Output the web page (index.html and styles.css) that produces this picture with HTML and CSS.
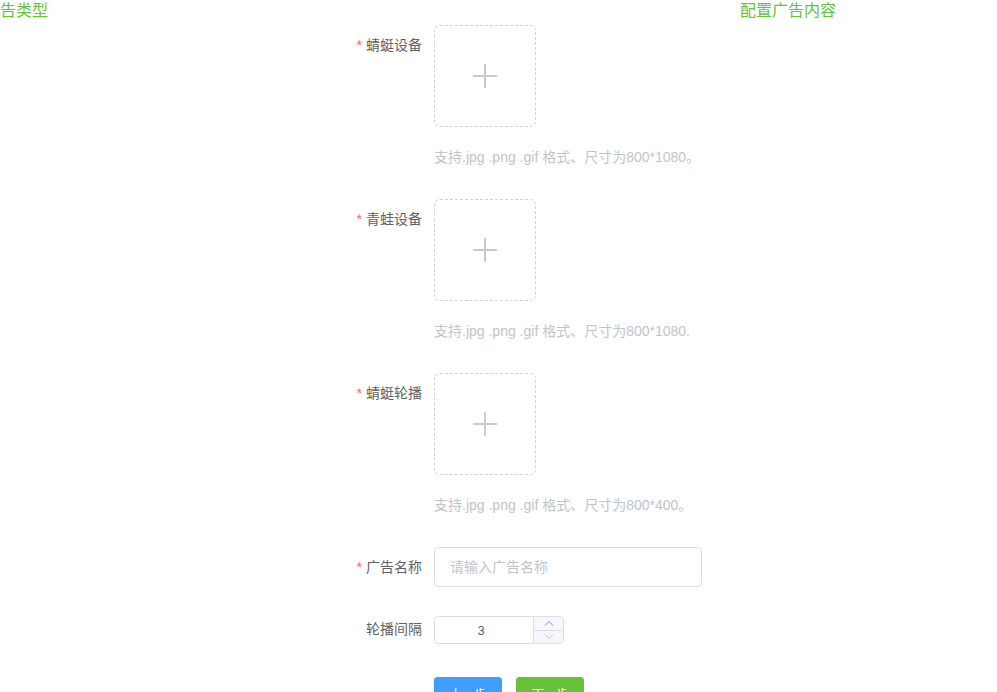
FILE: index.html
```html
<!DOCTYPE html>
<html lang="zh-CN">
<head>
  <meta charset="UTF-8">
  <title>配置广告内容</title>
  <link rel="stylesheet" href="styles.css">
</head>
<body>

  <!-- 步骤标题 -->
  <div class="steps">
    <span class="step-title">告类型</span>
    <span class="step-title step-right">配置广告内容</span>
  </div>

  <form class="ad-form">
    <div class="form-item">
      <label class="form-label required">蜻蜓设备</label>
      <div class="form-content">
        <div class="upload-box"><span class="plus"></span></div>
        <div class="tip">支持.jpg .png .gif 格式、尺寸为800*1080。</div>
      </div>
    </div>

    <div class="form-item">
      <label class="form-label required">青蛙设备</label>
      <div class="form-content">
        <div class="upload-box"><span class="plus"></span></div>
        <div class="tip">支持.jpg .png .gif 格式、尺寸为800*1080.</div>
      </div>
    </div>

    <div class="form-item">
      <label class="form-label required">蜻蜓轮播</label>
      <div class="form-content">
        <div class="upload-box"><span class="plus"></span></div>
        <div class="tip">支持.jpg .png .gif 格式、尺寸为800*400。</div>
      </div>
    </div>

    <div class="form-item">
      <label class="form-label required">广告名称</label>
      <div class="form-content">
        <input class="text-input" type="text" placeholder="请输入广告名称">
      </div>
    </div>

    <div class="form-item">
      <label class="form-label">轮播间隔</label>
      <div class="form-content">
        <div class="input-number">
          <input type="text" value="3">
          <div class="num-controls">
            <span class="num-btn">
              <svg width="10" height="6" viewBox="0 0 10 6"><path d="M1 5.5 L5 1.5 L9 5.5" fill="none" stroke="#909399" stroke-width="1"/></svg>
            </span>
            <span class="num-btn">
              <svg width="10" height="6" viewBox="0 0 10 6"><path d="M1 0.5 L5 4.5 L9 0.5" fill="none" stroke="#c0c4cc" stroke-width="1"/></svg>
            </span>
          </div>
        </div>
      </div>
    </div>

    <div class="form-item">
      <div class="form-label"></div>
      <div class="form-content buttons">
        <button type="button" class="btn btn-blue">上一步</button>
        <button type="button" class="btn btn-green">下一步</button>
      </div>
    </div>
  </form>

</body>
</html>
```

FILE: styles.css
```css
body {
  margin: 0;
  font-family: "Liberation Sans", "Noto Sans CJK SC", sans-serif;
  background: #fff;
  color: #606266;
  overflow: hidden;
}

/* 顶部步骤 */
.steps {
  display: flex;
  height: 22px;
  line-height: 22px;
  margin-bottom: 3px;
}

.step-title {
  font-size: 16px;
  color: #67c23a;
}

.step-right {
  margin-left: 692px;
}

/* 表单 */
.ad-form {
  padding-left: 334px;
}

.form-item {
  display: flex;
  margin-bottom: 22px;
}

.form-label {
  width: 100px;
  box-sizing: border-box;
  padding-right: 12px;
  text-align: right;
  font-size: 14px;
  line-height: 40px;
  color: #606266;
  flex-shrink: 0;
}

.form-label.required::before {
  content: "*";
  color: #f56c6c;
  margin-right: 4px;
}

.form-content {
  line-height: 40px;
  font-size: 14px;
}

.upload-box {
  width: 100px;
  height: 100px;
  border: 1px dashed #d0d2d6;
  border-radius: 6px;
  display: flex;
  align-items: center;
  justify-content: center;
}

.plus {
  position: relative;
  width: 24px;
  height: 24px;
}

.plus::before,
.plus::after {
  content: "";
  position: absolute;
  background: #c7cacf;
}

.plus::before {
  left: 0;
  top: 11px;
  width: 24px;
  height: 2px;
}

.plus::after {
  left: 11px;
  top: 0;
  width: 2px;
  height: 24px;
}

.tip {
  margin-top: 10px;
  color: #c0c4cc;
  font-size: 14px;
  line-height: 40px;
}

.text-input {
  width: 268px;
  height: 40px;
  box-sizing: border-box;
  border: 1px solid #dcdfe6;
  border-radius: 4px;
  padding: 0 15px;
  font-size: 14px;
  font-family: inherit;
  color: #606266;
  outline: none;
}

.text-input::placeholder {
  color: #c0c4cc;
}

/* 数字输入框 */
.input-number {
  position: relative;
  width: 130px;
  height: 28px;
  margin-top: 7px;
}

.input-number input {
  width: 100%;
  height: 28px;
  box-sizing: border-box;
  border: 1px solid #dcdfe6;
  border-radius: 4px;
  padding: 0 41px 0 5px;
  text-align: center;
  font-size: 13px;
  font-family: inherit;
  color: #606266;
  outline: none;
  display: block;
}

.num-controls {
  position: absolute;
  right: 1px;
  top: 1px;
  bottom: 1px;
  width: 29px;
  display: flex;
  flex-direction: column;
  border-left: 1px solid #dcdfe6;
  background: #f5f7fa;
  border-radius: 0 4px 4px 0;
}

.num-btn {
  flex: 1;
  display: flex;
  align-items: center;
  justify-content: center;
}

.num-btn:first-child {
  border-bottom: 1px solid #dcdfe6;
}

.buttons {
  padding-top: 6px;
  line-height: normal;
}

.btn {
  height: 32px;
  padding: 0 15px;
  border-radius: 3px;
  font-size: 12px;
  font-family: inherit;
  color: #fff;
  cursor: pointer;
}

.btn-blue {
  background: #409eff;
  border: 1px solid #409eff;
}

.btn-green {
  background: #67c23a;
  border: 1px solid #67c23a;
  margin-left: 10px;
}
```
